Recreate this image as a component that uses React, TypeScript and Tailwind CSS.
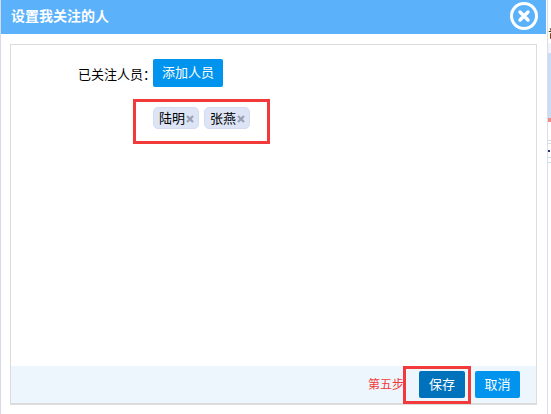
const font = { fontFamily: '"Liberation Sans", "Noto Sans CJK SC", sans-serif' };

function Tag({ name }: { name: string }) {
  return (
    <span className="flex items-center h-[22px] w-[46px] pl-[5px] rounded-[5px] bg-[#dce4f6] border border-[#d3dcf2] text-[13px] text-black leading-none whitespace-nowrap">
      {name}
      <svg width="10" height="10" viewBox="0 0 10 10" className="mt-[1px] shrink-0">
        <path d="M2 2 L8 8 M8 2 L2 8" stroke="#9aa1b3" strokeWidth="2.2" />
      </svg>
    </span>
  );
}

export default function App() {
  return (
    <div className="relative w-[551px] h-[414px] overflow-hidden bg-white flex" style={font}>
      <div className="w-[1px] bg-[#d9d9ec] shrink-0" />
      <div className="w-[545px] flex flex-col shrink-0">
        <div className="h-[34px] bg-[#5cb1fb] flex items-center justify-between pl-[10px] pr-[7px] shrink-0">
          <span className="text-[14px] font-bold text-white -mt-[2px]">设置我关注的人</span>
          <svg width="30" height="30" viewBox="0 0 30 30" className="-mt-[2px]">
            <circle cx="15" cy="15" r="12.5" fill="none" stroke="white" strokeWidth="3" />
            <path d="M11 11 L19 19 M19 11 L11 19" stroke="white" strokeWidth="3.4" strokeLinecap="round" />
          </svg>
        </div>
        <div className="ml-[9px] mr-[9px] mt-[10px] h-[361px] border border-[#dcdcdc] border-b-2 flex flex-col">
          <div className="flex-1 pt-[15px]">
            <div className="flex items-center pl-[67px]">
              <span className="text-[13px] text-black w-[75px] whitespace-nowrap mt-[2px]">已关注人员：</span>
              <button className="h-[28px] w-[70px] rounded-[2px] bg-[#0094ee] text-white text-[13px] -mt-[1px]">添加人员</button>
            </div>
            <div className="flex gap-[5px] pl-[142px] mt-[20px]">
              <Tag name="陆明" />
              <Tag name="张燕" />
            </div>
          </div>
          <div className="h-[37px] bg-[#eef6fd] flex items-center justify-end pr-[16px] shrink-0">
            <span className="text-[12px] text-[#f03a3a] mr-[15px]">第五步</span>
            <button className="h-[27px] w-[46px] rounded-[2px] bg-[#0072bb] text-white text-[13px] mr-[10px]">保存</button>
            <button className="h-[27px] w-[45px] rounded-[2px] bg-[#0094ee] text-white text-[13px]">取消</button>
          </div>
        </div>
      </div>
      <div className="w-[1px] shrink-0" />
      <div className="w-[1px] bg-[#dcdcec] shrink-0" />
      <div className="flex-1 flex flex-col overflow-hidden">
        <div className="h-[28px]" />
        <div className="h-[15px] w-[3px] overflow-hidden text-[12px] text-black leading-none whitespace-nowrap">
          晋
        </div>
        <div className="h-[10px] bg-[#f0f4fb]" />
        <div className="h-[65px] bg-[#c9dcf5]" />
        <div className="h-[4px] bg-[#f58a80]" />
        <div className="h-[18px]" />
        <div className="h-[1px] bg-[#cfe0e4]" />
        <div className="h-[2px]" />
        <div className="h-[1px] bg-[#cfe0e4]" />
        <div className="h-[6px]" />
        <div className="h-[2px] w-[2px] bg-[#20307a]" />
        <div className="h-[5px]" />
        <div className="h-[1px] bg-[#cfe0e4]" />
        <div className="h-[4px]" />
        <div className="h-[1px] bg-[#cfe0e4]" />
      </div>
      <div className="absolute left-[133px] top-[99px] w-[137px] h-[45px] border-[3px] border-[#f23a3a]" />
      <div className="absolute left-[403px] top-[366px] w-[68px] h-[38px] border-[3px] border-[#f23a3a]" />
    </div>
  );
}
